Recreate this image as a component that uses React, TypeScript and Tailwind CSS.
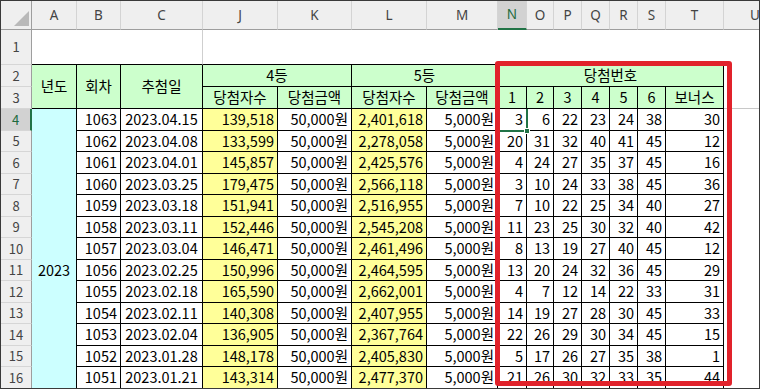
const cols = ['A', 'B', 'C', 'J', 'K', 'L', 'M', 'N', 'O', 'P', 'Q', 'R', 'S', 'T', 'U']

type Row = [number, string, string, string, number[]]

const rows: Row[] = [
  [1063, '2023.04.15', '139,518', '2,401,618', [3, 6, 22, 23, 24, 38, 30]],
  [1062, '2023.04.08', '133,599', '2,278,058', [20, 31, 32, 40, 41, 45, 12]],
  [1061, '2023.04.01', '145,857', '2,425,576', [4, 24, 27, 35, 37, 45, 16]],
  [1060, '2023.03.25', '179,475', '2,566,118', [3, 10, 24, 33, 38, 45, 36]],
  [1059, '2023.03.18', '151,941', '2,516,955', [7, 10, 22, 25, 34, 40, 27]],
  [1058, '2023.03.11', '152,446', '2,545,208', [11, 23, 25, 30, 32, 40, 42]],
  [1057, '2023.03.04', '146,471', '2,461,496', [8, 13, 19, 27, 40, 45, 12]],
  [1056, '2023.02.25', '150,996', '2,464,595', [13, 20, 24, 32, 36, 45, 29]],
  [1055, '2023.02.18', '165,590', '2,662,001', [4, 7, 12, 14, 22, 33, 31]],
  [1054, '2023.02.11', '140,308', '2,407,955', [14, 19, 27, 28, 30, 45, 33]],
  [1053, '2023.02.04', '136,905', '2,367,764', [22, 26, 29, 30, 34, 45, 15]],
  [1052, '2023.01.28', '148,178', '2,405,830', [5, 17, 26, 27, 35, 38, 1]],
  [1051, '2023.01.21', '143,314', '2,477,370', [21, 26, 30, 32, 33, 35, 44]],
  [1050, '2023.01.14', '158,261', '2,619,475', [6, 12, 31, 35, 38, 43, 17]],
  [1049, '2023.01.07', '133,212', '2,372,150', [3, 5, 13, 20, 21, 37, 17]],
]

const font = { fontFamily: '"Noto Sans CJK KR", "Noto Sans", sans-serif' }

function RowHead({ n, selected }: { n: number; selected?: boolean }) {
  return (
    <div
      className={`flex items-center justify-center text-[13px] border-b border-[#d6d6d6] ${
        selected
          ? 'bg-[#d2d2d2] text-[#1d6b3e] border-r-2 border-r-[#217346]'
          : 'bg-[#efefef] text-[#444] border-r border-r-[#9e9e9e]'
      }`}
    >
      {n}
    </div>
  )
}

function Cell({ children, className = '' }: { children?: React.ReactNode; className?: string }) {
  return (
    <div className={`flex items-center border-r border-b border-black text-[14.5px] text-black leading-none ${className}`}>
      {children}
    </div>
  )
}

export default function App() {
  return (
    <div className="w-[760px] h-[389px] overflow-hidden border border-[#3a3a3a] bg-white relative" style={font}>
      <div className="grid grid-cols-[31px_45px_44px_82px_75px_74px_75px_71px_29px_27px_28px_28px_28px_28px_58px_1fr] grid-rows-[29px_35px_22px_22px_repeat(15,21.5px)]">
        {/* Column headers */}
        <div className="bg-[#efefef] border-r border-b border-[#9e9e9e] relative">
          <svg className="absolute right-[2px] bottom-[3px]" width="15" height="15" viewBox="0 0 15 15">
            <polygon points="15,0 15,15 0,15" fill="#b9b9b9" />
          </svg>
        </div>
        {cols.map(c => (
          <div
            key={c}
            className={`flex items-center justify-center text-[13.5px] border-r border-[#d4d4d4] ${
              c === 'N'
                ? 'bg-[#d2d2d2] text-[#1d6b3e] border-b-2 border-b-[#217346]'
                : 'bg-[#efefef] text-[#444] border-b border-b-[#9e9e9e]'
            } ${c === 'U' ? 'justify-start pl-[26px]' : ''}`}
            style={{ fontFamily: '"Noto Sans", sans-serif' }}
          >
            {c}
          </div>
        ))}

        {/* Row 1 */}
        <RowHead n={1} />
        <div className="col-span-3 border-b border-black border-r border-r-[#cfcfcf]" />
        <div className="col-span-4 border-b border-black" />
        <div className="col-span-7 border-b border-black" />
        <div />

        {/* Row 2 */}
        <RowHead n={2} />
        <Cell className="row-span-2 justify-center bg-[#ccffcc]">년도</Cell>
        <Cell className="row-span-2 justify-center bg-[#ccffcc]">회차</Cell>
        <Cell className="row-span-2 justify-center bg-[#ccffcc]">추첨일</Cell>
        <Cell className="col-span-2 justify-center bg-[#ccffcc]">4등</Cell>
        <Cell className="col-span-2 justify-center bg-[#ccffcc]">5등</Cell>
        <Cell className="col-span-7 justify-center bg-[#ccffcc]">당첨번호</Cell>
        <div />

        {/* Row 3 */}
        <RowHead n={3} />
        <Cell className="justify-center bg-[#ccffcc]">당첨자수</Cell>
        <Cell className="justify-center bg-[#ccffcc]">당첨금액</Cell>
        <Cell className="justify-center bg-[#ccffcc]">당첨자수</Cell>
        <Cell className="justify-center bg-[#ccffcc]">당첨금액</Cell>
        {[1, 2, 3, 4, 5, 6].map(n => (
          <Cell key={n} className="justify-center bg-[#ccffcc]">{n}</Cell>
        ))}
        <Cell className="justify-center bg-[#ccffcc]">보너스</Cell>
        <div className="border-b border-[#c8c8c8]" />

        {/* Data rows */}
        {rows.map(([no, date, w4, w5, nums], i) => (
          <div key={no} className="contents">
            <RowHead n={i + 4} selected={i === 0} />
            {i === 0 && (
              <Cell className="row-span-15 justify-center bg-[#ccffff]">2023</Cell>
            )}
            <Cell className="justify-end pr-[3px]">{no}</Cell>
            <Cell className="justify-center">{date}</Cell>
            <Cell className="justify-end pr-[3px] bg-[#ffff99]">{w4}</Cell>
            <Cell className="justify-end pr-[3px]">50,000원</Cell>
            <Cell className="justify-end pr-[3px] bg-[#ffff99]">{w5}</Cell>
            <Cell className="justify-end pr-[3px]">5,000원</Cell>
            {nums.map((n, j) => (
              <Cell key={j} className="justify-end pr-[3px]">{n}</Cell>
            ))}
            <div />
          </div>
        ))}
      </div>

      {/* Active cell N4 */}
      <div className="absolute left-[525px] top-[108px] w-[2px] h-[23px] bg-[#217346]" />
      <div className="absolute left-[496px] top-[129px] w-[31px] h-[2px] bg-[#217346]" />
      <div className="absolute left-[523px] top-[127px] w-[6px] h-[6px] bg-[#217346] border border-white" />

      {/* Red highlight box */}
      <div className="absolute left-[494px] top-[60px] w-[237px] h-[325px] border-[5px] border-[#e1222b] rounded-[3px]" />
    </div>
  )
}
